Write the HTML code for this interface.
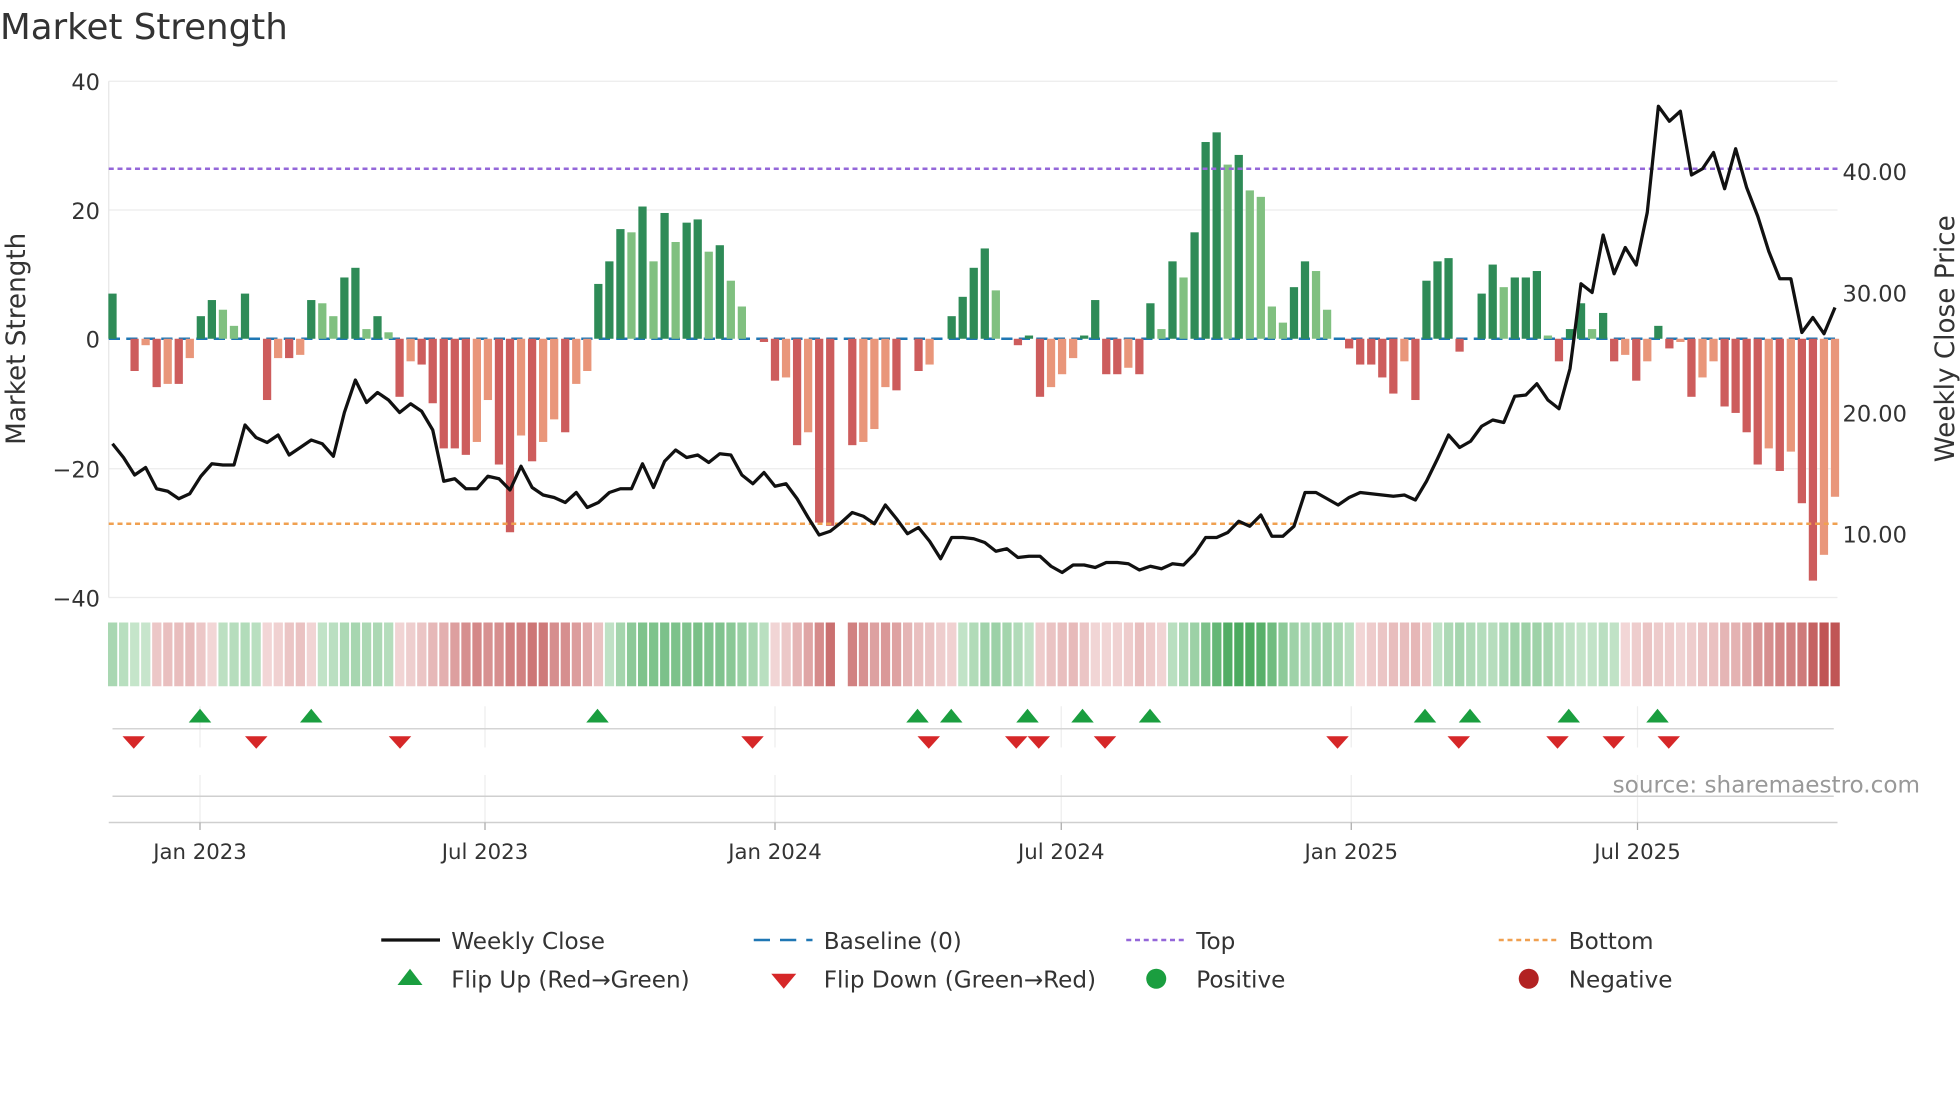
<!DOCTYPE html>
<html><head><meta charset="utf-8"><style>
html,body{margin:0;padding:0;background:#fff;width:1960px;height:1102px;overflow:hidden}
svg{display:block}
text{font-family:"DejaVu Sans","Liberation Sans",sans-serif}
</style></head><body>
<svg id="s" width="1960" height="1102" viewBox="0 0 1568 881.6" xmlns="http://www.w3.org/2000/svg">
<rect width="1568" height="882" fill="#fff"/>
<text x="0" y="31" font-size="28.5" fill="#333">Market Strength</text>
<g stroke="#ececec" stroke-width="1">
<line x1="87" y1="168" x2="1470" y2="168"/><line x1="87" y1="375" x2="1470" y2="375"/>
<line x1="87" y1="65" x2="1470" y2="65"/><line x1="87" y1="478" x2="1470" y2="478"/>
</g>
<line x1="87" y1="65" x2="87" y2="478" stroke="#e6e6e6"/>
<g font-size="18" fill="#333" text-anchor="end">
<text x="80" y="72">40</text><text x="80" y="175">20</text><text x="80" y="278">0</text>
<text x="80" y="382">−20</text><text x="80" y="485">−40</text>
</g>
<g font-size="18" fill="#333">
<text x="1474" y="144">40.00</text><text x="1474" y="241">30.00</text>
<text x="1474" y="337">20.00</text><text x="1474" y="434">10.00</text>
</g>
<text transform="translate(20,271) rotate(-90)" font-size="21" fill="#333" text-anchor="middle">Market Strength</text>
<text transform="translate(1563,271) rotate(-90)" font-size="21" fill="#333" text-anchor="middle">Weekly Close Price</text>
<line x1="87" y1="271" x2="1470" y2="271" stroke="#1f77b4" stroke-width="2" stroke-dasharray="9,5"/>
<g id="bars"></g>
<line x1="87" y1="135" x2="1470" y2="135" stroke="#9467d9" stroke-width="2" stroke-dasharray="4,3"/>
<line x1="87" y1="419" x2="1470" y2="419" stroke="#f0a050" stroke-width="2" stroke-dasharray="4,3"/>
<polyline id="price" fill="none" stroke="#111" stroke-width="2.6" stroke-linejoin="round"/>
<g id="heat"></g>
<g stroke="#eee"><line x1="160" y1="565" x2="160" y2="598"/><line x1="388" y1="565" x2="388" y2="598"/><line x1="620" y1="565" x2="620" y2="598"/><line x1="849" y1="565" x2="849" y2="598"/><line x1="1081" y1="565" x2="1081" y2="598"/><line x1="1310" y1="565" x2="1310" y2="598"/>
<line x1="160" y1="620" x2="160" y2="658"/><line x1="388" y1="620" x2="388" y2="658"/><line x1="620" y1="620" x2="620" y2="658"/><line x1="849" y1="620" x2="849" y2="658"/><line x1="1081" y1="620" x2="1081" y2="658"/><line x1="1310" y1="620" x2="1310" y2="658"/></g>
<line x1="90" y1="583" x2="1467" y2="583" stroke="#d4d4d4" stroke-width="1.2"/>
<line x1="90" y1="637" x2="1467" y2="637" stroke="#cfcfcf" stroke-width="1.2"/>
<line x1="87" y1="658" x2="1470" y2="658" stroke="#cfcfcf" stroke-width="1.2"/>
<g id="flips"></g>
<text x="1536" y="634" font-size="18.5" fill="#999" text-anchor="end">source: sharemaestro.com</text>
<g stroke="#aaa"><line x1="160" y1="658" x2="160" y2="664"/><line x1="388" y1="658" x2="388" y2="664"/><line x1="620" y1="658" x2="620" y2="664"/><line x1="849" y1="658" x2="849" y2="664"/><line x1="1081" y1="658" x2="1081" y2="664"/><line x1="1310" y1="658" x2="1310" y2="664"/></g>
<g font-size="17" fill="#333" text-anchor="middle">
<text x="160" y="687">Jan 2023</text><text x="388" y="687">Jul 2023</text><text x="620" y="687">Jan 2024</text>
<text x="849" y="687">Jul 2024</text><text x="1081" y="687">Jan 2025</text><text x="1310" y="687">Jul 2025</text>
</g>
<g font-size="18.5" fill="#333">
<line x1="305" y1="752" x2="352" y2="752" stroke="#111" stroke-width="2.6"/><text x="361" y="759">Weekly Close</text>
<line x1="603" y1="752" x2="650" y2="752" stroke="#1f77b4" stroke-width="2" stroke-dasharray="13,8"/><text x="659" y="759">Baseline (0)</text>
<line x1="901" y1="752" x2="948" y2="752" stroke="#9467d9" stroke-width="2" stroke-dasharray="4,3"/><text x="957" y="759">Top</text>
<line x1="1199" y1="752" x2="1246" y2="752" stroke="#f0a050" stroke-width="2" stroke-dasharray="4,3"/><text x="1255" y="759">Bottom</text>
<polygon points="328,775 338,788 318,788" fill="#1a9e3f"/><text x="361" y="790">Flip Up (Red→Green)</text>
<polygon points="617,779 637,779 627,791" fill="#d62728"/><text x="659" y="790">Flip Down (Green→Red)</text>
<circle cx="925" cy="783" r="8" fill="#1a9e3f"/><text x="957" y="790">Positive</text>
<circle cx="1223" cy="783" r="8" fill="#b22222"/><text x="1255" y="790">Negative</text>
</g>
</svg>
<script>
var V=[7,0,-5,-1,-7.5,-7,-7,-3,3.5,6,4.5,2,7,0,-9.5,-3,-3,-2.5,6,5.5,3.5,9.5,11,1.5,3.5,1,-9,-3.5,-4,-10,-17,-17,-18,-16,-9.5,-19.5,-30,-15,-19,-16,-12.5,-14.5,-7,-5,8.5,12,17,16.5,20.5,12,19.5,15,18,18.5,13.5,14.5,9,5,0,-0.5,-6.5,-6,-16.5,-14.5,-28.5,-29,0,-16.5,-16,-14,-7.5,-8,0,-5,-4,0,3.5,6.5,11,14,7.5,0,-1,0.5,-9,-7.5,-5.5,-3,0.5,6,-5.5,-5.5,-4.5,-5.5,5.5,1.5,12,9.5,16.5,30.5,32,27,28.5,23,22,5,2.5,8,12,10.5,4.5,0,-1.5,-4,-4,-6,-8.5,-3.5,-9.5,9,12,12.5,-2,0,7,11.5,8,9.5,9.5,10.5,0.5,-3.5,1.5,5.5,1.5,4,-3.5,-2.5,-6.5,-3.5,2,-1.5,-0.5,-9,-6,-3.5,-10.5,-11.5,-14.5,-19.5,-17,-20.5,-17.5,-25.5,-37.5,-33.5,-24.5];
var n=V.length,x0=90,x1=1468,dx=(x1-x0)/(n-1),ns="http://www.w3.org/2000/svg";
function el(p,t,a){var e=document.createElementNS(ns,t);for(var k in a)e.setAttribute(k,a[k]);document.getElementById(p).appendChild(e);return e;}
for(var i=0;i<n;i++){var v=V[i],x=x0+i*dx,p=i?V[i-1]:0;if(v===0)continue;var h=Math.abs(v)*5.16,c;
if(v>0)c=(v>=p)?"#2e8b57":"#80c080";else c=(v<=p)?"#cd5c5c":"#e9967a";
el("bars","rect",{x:x-3.3,y:v>0?271-h:271,width:6.6,height:h,fill:c});}
for(var i=0;i<n;i++){var x=x0+i*dx;if(i==66)continue;var s=0,w=0;for(var j=Math.max(0,i-3);j<=i;j++){s+=V[j];w++;}var m=s/w,c,a=Math.min(1,Math.abs(m)/28);
if(m>=0)c="rgb("+Math.round(200-125*a)+","+Math.round(230-60*a)+","+Math.round(205-110*a)+")";else c="rgb("+Math.round(242-50*a)+","+Math.round(215-130*a)+","+Math.round(215-130*a)+")";
el("heat","rect",{x:x-3.6,y:498,width:7.4,height:51,fill:c});}
var P=[355,366,380,374,391,393,399,395,381,371,372,372,340,350,354,348,364,358,352,355,365,330,304,322,314,320,330,323,329,344,385,383,391,391,381,383,392,373,390,396,398,402,394,406,402,394,391,391,371,390,369,360,366,364,370,363,364,380,387,378,389,387,399,414,428,425,418,410,413,419,404,415,427,422,433,447,430,430,431,434,441,439,446,445,445,453,458,452,452,454,450,450,451,456,453,455,451,452,443,430,430,426,417,421,412,429,429,421,394,394,399,404,398,394,395,396,397,396,400,385,367,348,358,353,341,336,338,317,316,307,320,327,295,227,234,188,219,198,212,170,85,97,89,140,135,122,151,119,150,173,201,223,223,266,254,267,246];
var pts=[];for(var i=0;i<P.length;i++)pts.push((x0+i*(x1-x0)/(P.length-1)).toFixed(1)+","+P[i]);
document.getElementById("price").setAttribute("points",pts.join(" "));
[160,249,478,734,761,822,866,920,1140,1176,1255,1326].forEach(function(x){el("flips","polygon",{points:x+",567 "+(x+9)+",578 "+(x-9)+",578",fill:"#1a9e3f"});});
[107,205,320,602,743,813,831,884,1070,1167,1246,1291,1335].forEach(function(x){el("flips","polygon",{points:(x-9)+",589 "+(x+9)+",589 "+x+",599",fill:"#d62728"});});
</script>
</body></html>
